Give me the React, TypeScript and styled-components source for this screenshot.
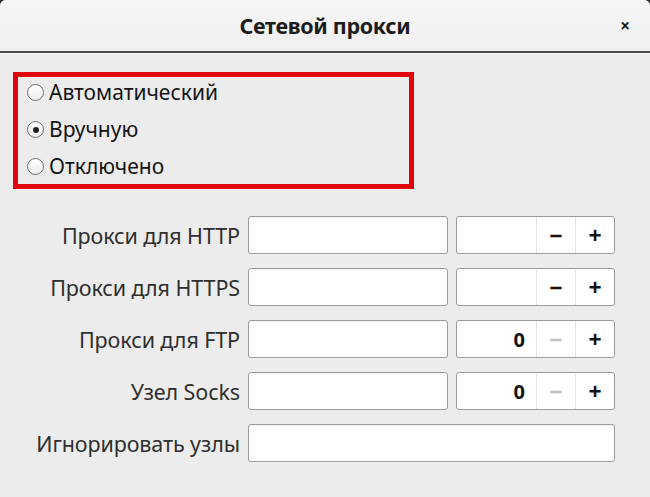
import React from 'react';
import styled, { createGlobalStyle } from 'styled-components';

const GlobalStyle = createGlobalStyle`
  html, body {
    margin: 0;
    padding: 0;
    background: #2e2e2e;
  }
  * {
    box-sizing: border-box;
  }
`;

const Window = styled.div`
  width: 650px;
  height: 497px;
  background: #ececec;
  border-radius: 6px 6px 0 0;
  overflow: hidden;
  font-family: "Noto Sans", "Open Sans", sans-serif;
  color: #2e2e2e;
  display: flex;
  flex-direction: column;
`;

const TitleBar = styled.header`
  height: 53px;
  flex: none;
  display: flex;
  align-items: center;
  justify-content: center;
  position: relative;
  background: linear-gradient(#f6f6f6, #efefef);
  border-bottom: 2px solid #4a4a4a;
  box-shadow: 0 1px 0 #fafafa;
`;

const Title = styled.h1`
  margin: 0;
  font-size: 21.5px;
  font-weight: 700;
  color: #1c1c1c;
  letter-spacing: -0.3px;
`;

const CloseButton = styled.span`
  position: absolute;
  right: 20px;
  top: 50%;
  transform: translateY(-52%);
  font-size: 17px;
  font-weight: 700;
  color: #1c1c1c;
`;

const Body = styled.main`
  flex: 1;
  display: flex;
  flex-direction: column;
  padding: 19px 0 0 13px;
`;

const ModeBox = styled.div`
  width: 401px;
  height: 117px;
  border: 5px solid #e2040c;
  display: flex;
  flex-direction: column;
  justify-content: center;
  gap: 8px;
  padding: 0 0 2px 9px;
`;

const RadioRow = styled.label`
  display: flex;
  align-items: center;
  gap: 5px;
  font-size: 21px;
  line-height: 29px;
  color: #141414;
`;

const RadioMark = styled.span<{ $checked?: boolean }>`
  width: 17px;
  height: 17px;
  flex: none;
  border-radius: 50%;
  border: 1px solid #6f6f6f;
  background: linear-gradient(#ffffff, #ececec);
  display: flex;
  align-items: center;
  justify-content: center;
  &::after {
    content: '';
    width: 6px;
    height: 6px;
    border-radius: 50%;
    background: #1e1e1e;
    display: ${p => (p.$checked ? 'block' : 'none')};
  }
`;

const Form = styled.div`
  margin-top: 27px;
  display: grid;
  grid-template-columns: 227px 200px 159px;
  column-gap: 8px;
  row-gap: 14px;
  align-items: center;
`;

const Label = styled.span`
  text-align: right;
  font-size: 21.5px;
  color: #2f2f2f;
  letter-spacing: -0.1px;
  white-space: nowrap;
`;

const Entry = styled.div<{ $wide?: boolean }>`
  height: 38px;
  background: #ffffff;
  border: 1px solid #9c9c9c;
  border-radius: 3px;
  box-shadow: inset 0 1px 1px rgba(0, 0, 0, 0.06);
  grid-column: ${p => (p.$wide ? 'span 2' : 'auto')};
`;

const Spin = styled.div`
  height: 38px;
  display: grid;
  grid-template-columns: 1fr 39px 39px;
  background: #ffffff;
  border: 1px solid #9c9c9c;
  border-radius: 3px;
  overflow: hidden;
`;

const SpinValue = styled.span`
  display: flex;
  align-items: center;
  justify-content: flex-end;
  padding-right: 11px;
  font-size: 20px;
  font-weight: 700;
  color: #141414;
`;

const SpinButton = styled.span<{ $disabled?: boolean }>`
  display: flex;
  align-items: center;
  justify-content: center;
  border-left: 1px solid #e4e4e4;
  font-size: 23px;
  font-weight: 700;
  color: ${p => (p.$disabled ? '#c4c4c4' : '#141414')};
`;

type ProxyRow = { label: string; port?: string };

const rows: ProxyRow[] = [
  { label: 'Прокси для HTTP' },
  { label: 'Прокси для HTTPS' },
  { label: 'Прокси для FTP', port: '0' },
  { label: 'Узел Socks', port: '0' },
];

export default function App() {
  return (
    <>
      <GlobalStyle />
      <Window>
        <TitleBar>
          <Title>Сетевой прокси</Title>
          <CloseButton>×</CloseButton>
        </TitleBar>
        <Body>
          <ModeBox>
            <RadioRow><RadioMark />Автоматический</RadioRow>
            <RadioRow><RadioMark $checked />Вручную</RadioRow>
            <RadioRow><RadioMark />Отключено</RadioRow>
          </ModeBox>
          <Form>
            {rows.map(row => (
              <React.Fragment key={row.label}>
                <Label>{row.label}</Label>
                <Entry />
                <Spin>
                  <SpinValue>{row.port ?? ''}</SpinValue>
                  <SpinButton $disabled={row.port === '0'}>−</SpinButton>
                  <SpinButton>+</SpinButton>
                </Spin>
              </React.Fragment>
            ))}
            <Label>Игнорировать узлы</Label>
            <Entry $wide />
          </Form>
        </Body>
      </Window>
    </>
  );
}
